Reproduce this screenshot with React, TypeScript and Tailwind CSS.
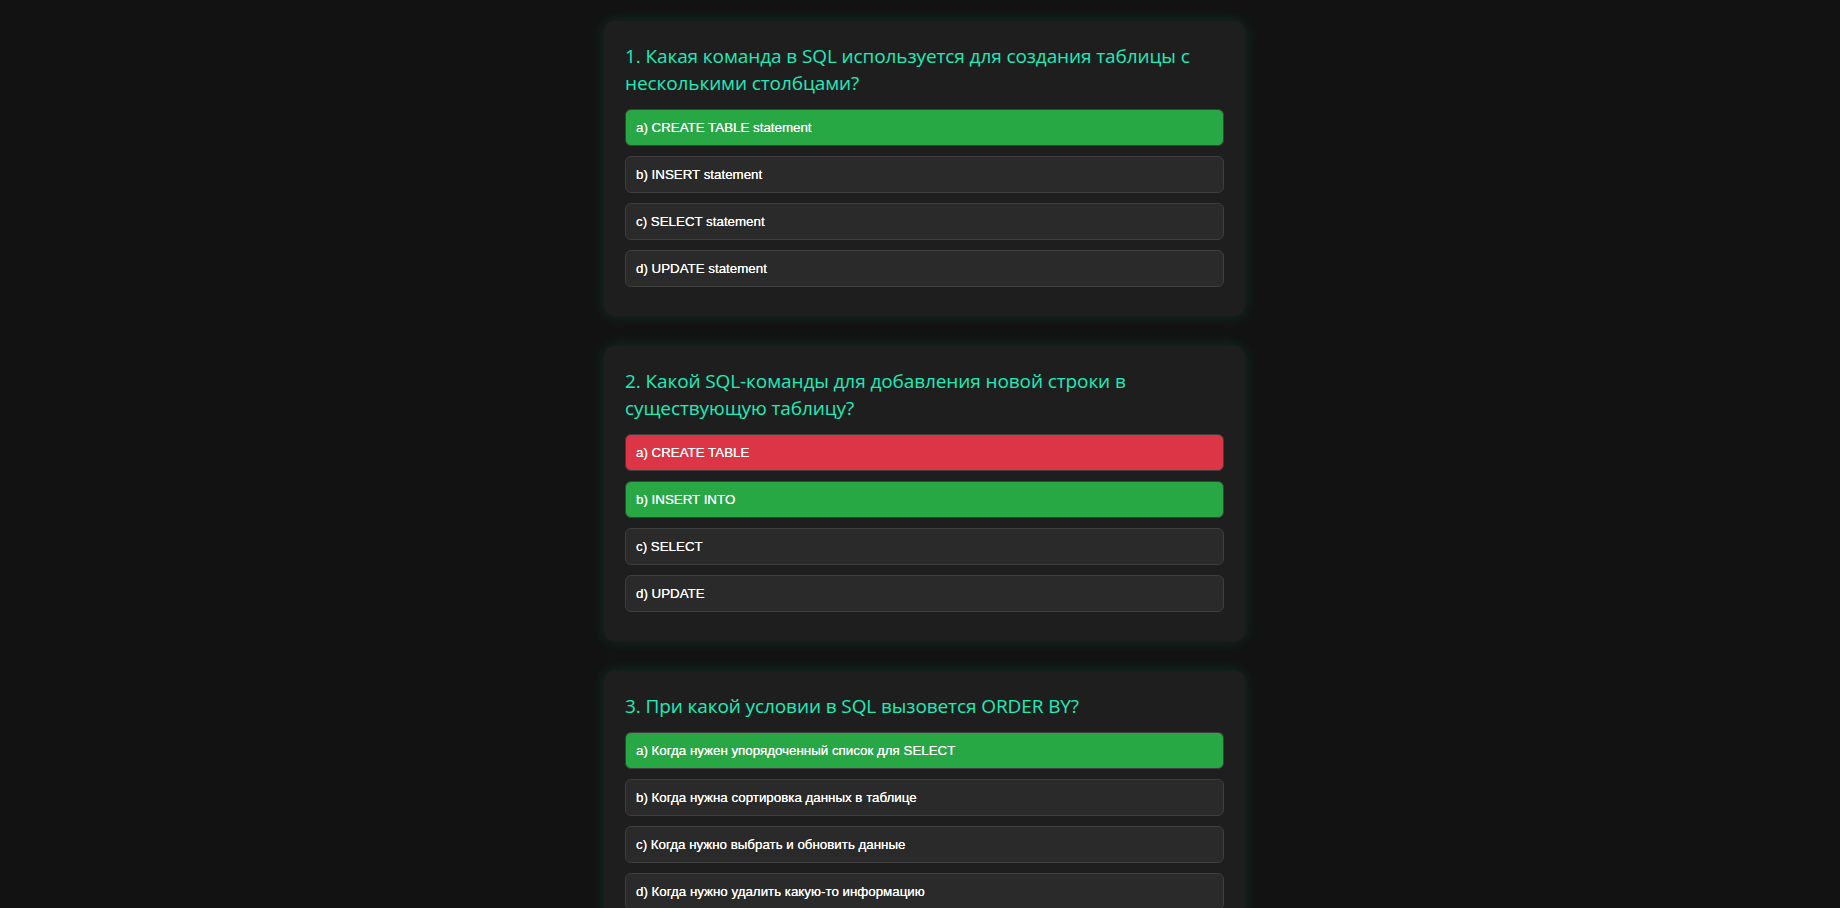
const questions = [
  {
    title: "1. Какая команда в SQL используется для создания таблицы с несколькими столбцами?",
    options: [
      { text: "a) CREATE TABLE statement", state: "correct" },
      { text: "b) INSERT statement", state: "" },
      { text: "c) SELECT statement", state: "" },
      { text: "d) UPDATE statement", state: "" },
    ],
  },
  {
    title: "2. Какой SQL-команды для добавления новой строки в существующую таблицу?",
    options: [
      { text: "a) CREATE TABLE", state: "wrong" },
      { text: "b) INSERT INTO", state: "correct" },
      { text: "c) SELECT", state: "" },
      { text: "d) UPDATE", state: "" },
    ],
  },
  {
    title: "3. При какой условии в SQL вызовется ORDER BY?",
    options: [
      { text: "a) Когда нужен упорядоченный список для SELECT", state: "correct" },
      { text: "b) Когда нужна сортировка данных в таблице", state: "" },
      { text: "c) Когда нужно выбрать и обновить данные", state: "" },
      { text: "d) Когда нужно удалить какую-то информацию", state: "" },
    ],
  },
];

function optionClass(state: string) {
  if (state === "correct") return "bg-[#28a745]";
  if (state === "wrong") return "bg-[#dc3545]";
  return "bg-[#2a2a2a]";
}

export default function App() {
  return (
    <div className="min-h-screen bg-[#121212] pt-[21px] pb-10 pl-[9px] flex flex-col items-center gap-[30px]">
      {questions.map((q) => (
        <div
          key={q.title}
          className="w-[641px] bg-[#1e1e1e] rounded-[10px] px-[21px] pt-[22px] pb-[29px] shadow-[0_0_15px_rgba(0,255,170,0.13)]"
        >
          {/* Question */}
          <h3 className="text-[19px] leading-[27px] tracking-[-0.1px] text-[#1eecb8] mb-[12px] font-['Open_Sans',sans-serif]">
            {q.title}
          </h3>

          <div className="flex flex-col gap-[10px]">
            {q.options.map((o) => (
              <button
                key={o.text}
                className={`h-[37px] w-full text-left px-[10px] rounded-[6px] border border-[#3e3e3e] text-white text-[13.333px] [text-shadow:0_0_0.4px_#fff] font-['Liberation_Sans',Arial,sans-serif] ${optionClass(o.state)}`}
              >
                {o.text}
              </button>
            ))}
          </div>
        </div>
      ))}
    </div>
  );
}
